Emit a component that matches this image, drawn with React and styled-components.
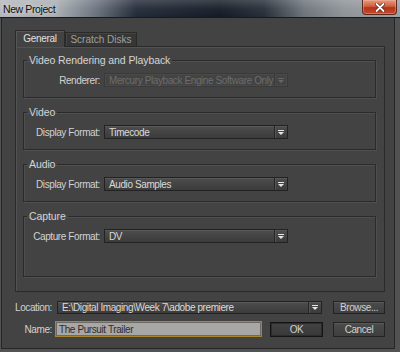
import React from "react";
import styled, { createGlobalStyle } from "styled-components";

const Global = createGlobalStyle`
  html, body { margin: 0; padding: 0; background: #4a4a4a; }
  * { box-sizing: border-box; }
`;

const Window = styled.div`
  width: 400px;
  height: 352px;
  display: flex;
  flex-direction: column;
  background: #505254;
  font-family: "Liberation Sans", Arial, sans-serif;
  font-size: 10px;
  letter-spacing: -0.4px;
  color: #d2d2d2;
  overflow: hidden;
`;

const TitleBar = styled.div`
  height: 18px;
  flex: none;
  display: flex;
  align-items: flex-start;
  justify-content: space-between;
  border-bottom: 1px solid #1a1a1a;
  background:
    linear-gradient(180deg, rgba(255,255,255,0.18) 0%, rgba(255,255,255,0.05) 50%, rgba(0,0,0,0) 100%),
    linear-gradient(90deg, #b3b7bb 0%, #a8adb2 14%, #6a727e 24%, #222a37 34%, #141a25 55%, #262d38 66%, #6d737a 76%, #8e9398 86%, #9ca1a6 100%);
`;

const Title = styled.span`
  padding: 3px 0 0 3px;
  font-size: 10.5px;
  letter-spacing: -0.4px;
  color: #101010;
  text-shadow: 0 0 5px rgba(255,255,255,0.8);
`;

const CloseButton = styled.div`
  width: 35px;
  height: 15px;
  margin-right: 3px;
  display: flex;
  align-items: center;
  justify-content: center;
  border: 1px solid #5e2a1e;
  border-top: none;
  border-radius: 0 0 4px 4px;
  background: linear-gradient(180deg, #e49a82 0%, #d0603f 45%, #b3341a 55%, #c44a2c 100%);
  box-shadow: inset 0 0 0 1px rgba(255,200,180,0.35);
`;

const Body = styled.div`
  flex: 1;
  margin: 0 5px 3px 1px;
  padding: 12px 9px 0 13px;
  background: #434343;
  border: 1px solid #262626;
  border-top: none;
  display: flex;
  flex-direction: column;
`;

const Tabs = styled.div`
  display: flex;
  align-items: flex-end;
  height: 16px;
`;

const Tab = styled.div`
  height: ${(p) => (p.$active ? "17px" : "14px")};
  width: ${(p) => p.$w}px;
  margin-bottom: ${(p) => (p.$active ? "-1px" : "0")};
  position: relative;
  z-index: ${(p) => (p.$active ? 1 : 0)};
  display: flex;
  align-items: center;
  justify-content: center;
  padding-bottom: ${(p) => (p.$active ? "1px" : "0")};
  letter-spacing: ${(p) => (p.$active ? "-0.3px" : "0")};
  background: ${(p) => (p.$active ? "#434343" : "#363636")};
  color: ${(p) => (p.$active ? "#e0e0e0" : "#a0a0a0")};
  border: 1px solid #2a2a2a;
  border-bottom: none;
  box-shadow: ${(p) => (p.$active ? "inset 1px 1px 0 #565656" : "inset 1px 1px 0 #444")};
`;

const Panel = styled.div`
  height: 246px;
  border: 1px solid #2a2a2a;
  box-shadow: inset 1px 1px 0 #535353;
  padding: 7px 8px 0 7px;
  display: flex;
  flex-direction: column;
  gap: ${(p) => p.$gap}px;
`;

const Group = styled.fieldset`
  margin: 0;
  padding: 7px 8px ${(p) => p.$pb}px 6px;
  border: 1px solid #2b2b2b;
  box-shadow: 1px 1px 0 #4f4f4f, inset 1px 1px 0 #4f4f4f;
  min-width: 0;
`;

const Legend = styled.legend`
  padding: 0 2px;
  margin-left: -3px;
  line-height: 12px;
  font-size: 10.5px;
  letter-spacing: -0.1px;
  color: #d4d4d4;
`;

const Row = styled.div`
  display: grid;
  grid-template-columns: 70px 184px;
  column-gap: 4px;
  align-items: center;
`;

const Label = styled.span`
  text-align: right;
  white-space: nowrap;
`;

const Select = styled.div`
  height: ${(p) => p.$h || 14}px;
  width: ${(p) => (p.$w ? `${p.$w}px` : "auto")};
  display: flex;
  align-items: stretch;
  border: 1px solid ${(p) => (p.$disabled ? "#3a3a3a" : "#222")};
  background: ${(p) =>
    p.$disabled ? "#434343" : "linear-gradient(180deg, #4d4d4d 0%, #444 50%, #3c3c3c 100%)"};
  box-shadow: ${(p) => (p.$disabled ? "inset 0 0 0 1px #4a4a4a" : "inset 0 1px 0 #595959")};
  color: ${(p) => (p.$disabled ? "#6c6c6c" : "#dadada")};
`;

const SelectText = styled.span`
  flex: 1;
  padding-left: 4px;
  display: flex;
  align-items: center;
  white-space: nowrap;
  overflow: hidden;
`;

const SelectArrow = styled.span`
  width: 13px;
  flex: none;
  display: flex;
  align-items: center;
  justify-content: center;
  border-left: 1px solid ${(p) => (p.$disabled ? "#3a3a3a" : "#262626")};
  box-shadow: inset 1px 0 0 ${(p) => (p.$disabled ? "#4a4a4a" : "#565656")};
`;

const Arrow = ({ color }) => (
  <svg width="6" height="5" viewBox="0 0 6 5">
    <rect x="0" y="0" width="6" height="1" fill={color} />
    <polygon points="0,2 6,2 3,5" fill={color} />
  </svg>
);

const Dropdown = ({ value, disabled, w, h }) => (
  <Select $disabled={disabled} $w={w} $h={h}>
    <SelectText>{value}</SelectText>
    <SelectArrow $disabled={disabled}>
      <Arrow color={disabled ? "#666" : "#e6e6e6"} />
    </SelectArrow>
  </Select>
);

const Footer = styled.div`
  margin-top: 9px;
  display: flex;
  flex-direction: column;
  gap: 7px;
`;

const FooterRow = styled.div`
  display: flex;
  align-items: center;
`;

const FooterLabel = styled.span`
  width: 37px;
  margin-right: 5px;
  text-align: right;
  white-space: nowrap;
`;

const NameInput = styled.div`
  width: 207px;
  height: 16px;
  margin-left: -2px;
  padding-left: 3px;
  display: flex;
  align-items: center;
  background: #a7a7a7;
  color: #2e2e2e;
  border: 1px solid #a8862e;
  box-shadow: inset 0 0 0 1px #6e6a60;
`;

const Button = styled.div`
  width: ${(p) => p.$w}px;
  height: ${(p) => p.$h}px;
  margin-left: ${(p) => p.$ml}px;
  display: flex;
  align-items: center;
  justify-content: center;
  color: #d0d0d0;
  border: 1px solid ${(p) => (p.$default ? "#141414" : "#232323")};
  background: ${(p) =>
    p.$default ? "linear-gradient(180deg, #434343, #393939)" : "linear-gradient(180deg, #4c4c4c, #3e3e3e)"};
  box-shadow: ${(p) => (p.$default ? "inset 0 0 0 1px #2c2c2c" : "inset 0 1px 0 #5a5a5a")};
`;

export default function App() {
  return (
    <>
      <Global />
      <Window>
        <TitleBar>
          <Title>New Project</Title>
          <CloseButton>
            <svg width="10" height="9" viewBox="0 0 10 9">
              <path d="M1.5 1 L8.5 8 M8.5 1 L1.5 8" stroke="#5a1e12" strokeWidth="3.2" strokeLinecap="round" />
              <path d="M1.5 1 L8.5 8 M8.5 1 L1.5 8" stroke="#ffffff" strokeWidth="1.8" strokeLinecap="round" />
            </svg>
          </CloseButton>
        </TitleBar>
        <Body>
          <Tabs>
            <Tab $active $w={50}>General</Tab>
            <Tab $w={72}>Scratch Disks</Tab>
          </Tabs>
          <Panel $gap={8}>
            <Group $pb={10}>
              <Legend>Video Rendering and Playback</Legend>
              <Row>
                <Label>Renderer:</Label>
                <Dropdown disabled value="Mercury Playback Engine Software Only" />
              </Row>
            </Group>
            <Group $pb={10}>
              <Legend>Video</Legend>
              <Row>
                <Label>Display Format:</Label>
                <Dropdown value="Timecode" />
              </Row>
            </Group>
            <Group $pb={10}>
              <Legend>Audio</Legend>
              <Row>
                <Label>Display Format:</Label>
                <Dropdown value="Audio Samples" />
              </Row>
            </Group>
            <Group $pb={33}>
              <Legend>Capture</Legend>
              <Row>
                <Label>Capture Format:</Label>
                <Dropdown value="DV" />
              </Row>
            </Group>
          </Panel>
          <Footer>
            <FooterRow>
              <FooterLabel>Location:</FooterLabel>
              <Dropdown w={265} h={13} value="E:\Digital Imaging\Week 7\adobe premiere" />
              <Button $w={52} $h={13} $ml={11}>Browse...</Button>
            </FooterRow>
            <FooterRow>
              <FooterLabel>Name:</FooterLabel>
              <NameInput>The Pursuit Trailer</NameInput>
              <Button $default $w={53} $h={15} $ml={8}>OK</Button>
              <Button $w={52} $h={15} $ml={10}>Cancel</Button>
            </FooterRow>
          </Footer>
        </Body>
      </Window>
    </>
  );
}
